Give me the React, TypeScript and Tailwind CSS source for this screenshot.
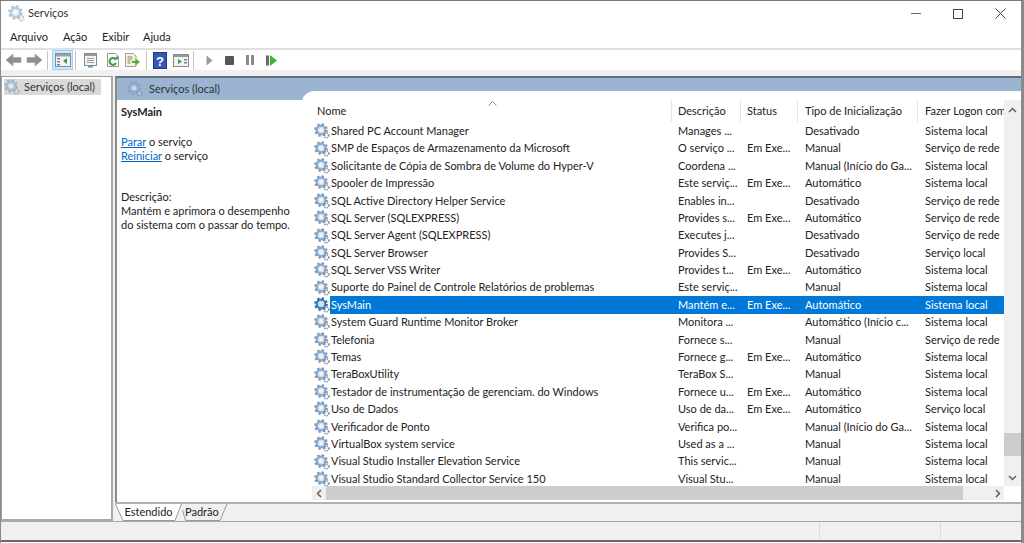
import React from "react";

const Gear = ({ size = 16, dim = false, selected = false }: { size?: number; dim?: boolean; selected?: boolean }) => (
  <svg width={size} height={size} viewBox="0 0 16 16" className={`shrink-0 ${dim ? "opacity-60" : ""}`}>
    <circle cx="7" cy="7" r="5.6" fill="none" stroke={selected ? "#2a5f99" : "#6f93b5"} strokeWidth="2.4" strokeDasharray="2.2 2.2" />
    <circle cx="7" cy="7" r="4.3" fill="none" stroke={selected ? "#3f7ab5" : "#88a8c6"} strokeWidth="2.2" />
    <circle cx="7" cy="7" r="2.5" fill={selected ? "#cfe3f5" : "#f2f6fa"} stroke="#a8c0d6" strokeWidth="0.6" />
    <circle cx="12.4" cy="12.4" r="2.4" fill="none" stroke="#7b8995" strokeWidth="1.7" strokeDasharray="1.1 1" />
    <circle cx="12.4" cy="12.4" r="1.2" fill="#e3e8ed" />
  </svg>
);

const Arrow = ({ flip = false }: { flip?: boolean }) => (
  <svg width="17" height="14" viewBox="0 0 17 14" className="shrink-0">
    <path
      d={flip ? "M1 4.500h8V1l7 6-7 6V9.500H1z" : "M16 4.500H8V1L1 7l7 6V9.500h8z"}
      fill="#8f8f8f"
      stroke="#a8a8a8"
      strokeWidth="0.8"
    />
  </svg>
);

const Sep = () => <div className="w-px h-[19px] bg-[#c4c4c4] shrink-0" />;

const Doc = ({ children }: { children: React.ReactNode }) => (
  <svg width="16" height="16" viewBox="0 0 16 16" className="shrink-0">{children}</svg>
);

const Toolbar = () => (
  <div className="h-[20px] flex items-center bg-white shrink-0 pl-[4px]">
    <Arrow />
    <div className="w-[4px] shrink-0" />
    <Arrow flip />
    <div className="w-[4px] shrink-0" />
    <Sep />
    <div className="ml-[4px] w-[21px] h-[20px] bg-[#cce8ff] border border-[#99d1ff] flex items-center justify-center shrink-0">
      <Doc>
        <rect x="0.500" y="1.500" width="15" height="13" fill="#f5f5f5" stroke="#8c8c8c" />
        <rect x="1" y="2" width="14" height="2.500" fill="#8fa3b5" />
        <rect x="2" y="6" width="3" height="1.500" fill="#6f8296" />
        <rect x="2" y="9" width="3" height="1.500" fill="#6f8296" />
        <rect x="2" y="12" width="3" height="1.500" fill="#6f8296" />
        <path d="M12 6v6L8 9z" fill="#2ea043" />
      </Doc>
    </div>
    <div className="w-[2px] shrink-0" />
    <Sep />
    <div className="w-[7px] shrink-0" />
    <Doc>
      <rect x="1.500" y="1.500" width="12" height="12" fill="#f7f4ea" stroke="#8a8a8a" />
      <rect x="2" y="2" width="11" height="2" fill="#9a9a9a" />
      <path d="M4 6.500h7M4 8.500h7M4 10.500h7" stroke="#8ba0b8" />
      <rect x="5" y="14" width="5" height="1.500" fill="#35a8e0" />
    </Doc>
    <div className="w-[6px] shrink-0" />
    <Doc>
      <path d="M2.500 1.500h8l3 3v10h-11z" fill="#fafafa" stroke="#9a9a9a" />
      <path d="M11 7.800A3.400 3.400 0 1 0 11 11" fill="none" stroke="#2f9e44" strokeWidth="2" />
      <path d="M9 7.200h4V3.800z" fill="#2f9e44" />
    </Doc>
    <div className="w-[3px] shrink-0" />
    <Doc>
      <path d="M1.500 1.500h8l2.500 2.500v10.500h-10.500z" fill="#f7f2d8" stroke="#a0a0a0" />
      <path d="M3.500 5h5M3.500 7h5M3.500 9h3M3.500 11h3" stroke="#8a8a70" />
      <path d="M8 9h3.500V6.500L16 10l-4.500 3.500V11H8z" fill="#4cae3f" />
    </Doc>
    <div className="w-[6px] shrink-0" />
    <Sep />
    <div className="w-[6px] shrink-0" />
    <svg width="14" height="17" viewBox="0 0 14 17" className="shrink-0">
      <rect x="0.500" y="0.500" width="13" height="16" fill="#3558b8" stroke="#1f3a80" />
      <text x="7" y="13.500" textAnchor="middle" fontSize="13" fontWeight="700" fontFamily="Liberation Sans, sans-serif" fill="#ffffff">?</text>
    </svg>
    <div className="w-[6px] shrink-0" />
    <Doc>
      <rect x="0.500" y="2.500" width="15" height="12" fill="#f2f2f2" stroke="#8c8c8c" />
      <rect x="1" y="3" width="14" height="2" fill="#8f9ba6" />
      <path d="M5 7v5l4-2.500z" fill="#2ea043" />
      <rect x="11" y="7" width="3" height="1.500" fill="#6f8296" />
      <rect x="11" y="10" width="3" height="1.500" fill="#6f8296" />
    </Doc>
    <div className="w-[4px] shrink-0" />
    <Sep />
    <div className="w-[12px] shrink-0" />
    <svg width="7" height="11" viewBox="0 0 7 11" className="shrink-0"><path d="M0.500 0.500l6 5-6 5z" fill="#9a9a9a" /></svg>
    <div className="w-[12px] shrink-0" />
    <div className="w-[9px] h-[9px] rounded-[1px] bg-[#555555] shrink-0" />
    <div className="w-[12px] shrink-0" />
    <div className="w-[8px] h-[10px] shrink-0 flex justify-between">
      <div className="w-[3px] bg-[#8a8a8a]" />
      <div className="w-[3px] bg-[#8a8a8a]" />
    </div>
    <div className="w-[12px] shrink-0" />
    <svg width="11" height="11" viewBox="0 0 11 11" className="shrink-0">
      <rect x="0" y="0.500" width="3" height="10" fill="#6a6a6a" />
      <path d="M4 0l7 5.500-7 5.500z" fill="#35b935" />
    </svg>
  </div>
);

type Row = [string, string, string, string, string];
const rows: Row[] = [
  ["Shared PC Account Manager", "Manages ...", "", "Desativado", "Sistema local"],
  ["SMP de Espaços de Armazenamento da Microsoft", "O serviço ...", "Em Exe...", "Manual", "Serviço de rede"],
  ["Solicitante de Cópia de Sombra de Volume do Hyper-V", "Coordena ...", "", "Manual (Início do Ga...", "Sistema local"],
  ["Spooler de Impressão", "Este serviç...", "Em Exe...", "Automático", "Sistema local"],
  ["SQL Active Directory Helper Service", "Enables in...", "", "Desativado", "Serviço de rede"],
  ["SQL Server (SQLEXPRESS)", "Provides s...", "Em Exe...", "Automático", "Serviço de rede"],
  ["SQL Server Agent (SQLEXPRESS)", "Executes j...", "", "Desativado", "Serviço de rede"],
  ["SQL Server Browser", "Provides S...", "", "Desativado", "Serviço local"],
  ["SQL Server VSS Writer", "Provides t...", "Em Exe...", "Automático", "Sistema local"],
  ["Suporte do Painel de Controle Relatórios de problemas", "Este serviç...", "", "Manual", "Sistema local"],
  ["SysMain", "Mantém e...", "Em Exe...", "Automático", "Sistema local"],
  ["System Guard Runtime Monitor Broker", "Monitora ...", "", "Automático (Início c...", "Sistema local"],
  ["Telefonia", "Fornece s...", "", "Manual", "Serviço de rede"],
  ["Temas", "Fornece g...", "Em Exe...", "Automático", "Sistema local"],
  ["TeraBoxUtility", "TeraBox S...", "", "Manual", "Sistema local"],
  ["Testador de instrumentação de gerenciam. do Windows", "Fornece u...", "Em Exe...", "Automático", "Sistema local"],
  ["Uso de Dados", "Uso de da...", "Em Exe...", "Automático", "Serviço local"],
  ["Verificador de Ponto", "Verifica po...", "", "Manual (Início do Ga...", "Sistema local"],
  ["VirtualBox system service", "Used as a ...", "", "Manual", "Sistema local"],
  ["Visual Studio Installer Elevation Service", "This servic...", "", "Manual", "Sistema local"],
  ["Visual Studio Standard Collector Service 150", "Visual Stu...", "", "Manual", "Sistema local"],
];

const Chevron = ({ d }: { d: string }) => (
  <svg width="9" height="9" viewBox="0 0 9 9" className="shrink-0">
    <path d={d} fill="none" stroke="#606060" strokeWidth="1.500" />
  </svg>
);

export default function App() {
  return (
    <div
      className="w-[1024px] h-[543px] overflow-hidden flex flex-col bg-white text-[11px] text-[#1a1a1a] pb-[1px] border-t border-[#7a7a7a] border-l border-r-[3px] border-r-[#8a8a8a] border-l-[#8a8a8a]"
      style={{ fontFamily: 'Lato, "Noto Sans", sans-serif' }}
    >
      {/* title */}
      <div className="h-[25px] bg-white flex items-center shrink-0 pl-[7px]">
        <Gear size={17} dim />
        <span className="ml-[3px] text-[#333333]">Serviços</span>
        <div className="ml-auto flex items-center">
          <div className="w-[42px] flex justify-center">
            <div className="w-[10px] h-px bg-[#666666]" />
          </div>
          <div className="w-[42px] flex justify-center">
            <div className="w-[10px] h-[10px] border border-[#444444]" />
          </div>
          <div className="w-[42px] flex justify-center">
            <svg width="11" height="11" viewBox="0 0 11 11"><path d="M0.500 0.500l10 10M10.500 0.500l-10 10" stroke="#444444" strokeWidth="1" /></svg>
          </div>
        </div>
      </div>
      {/* menu */}
      <div className="h-[24px] bg-white flex items-center shrink-0 pl-[9px] gap-[15px] text-[#222222] border-b-2 border-[#e0e0e0]">
        <span className="w-[38px]">Arquivo</span>
        <span className="w-[24px]">Ação</span>
        <span className="w-[26px]">Exibir</span>
        <span>Ajuda</span>
      </div>
      <Toolbar />
      {/* body */}
      <div className="flex-1 min-h-0 flex pt-[6px] bg-[#f0f0f0]">
        {/* tree */}
        <div className="w-[112px] shrink-0 h-full bg-white border-t border-t-[#a0a0a0] border-l border-l-[#a0a0a0] border-r-2 border-r-[#a8a8a8] border-b-2 border-b-[#a8a8a8] p-[2px]">
          <div className="h-[16px] w-[97px] bg-[#d9d9d9] flex items-center text-[#333333] whitespace-nowrap">
            <Gear size={16} dim />
            <span className="ml-[4px]">Serviços (local)</span>
          </div>
        </div>
        {/* main */}
        <div className="flex-1 min-w-0 ml-[2px] flex flex-col">
          <div className="h-[426px] shrink-0 flex bg-[#9ab4d1] border-t-2 border-t-[#5f6f80] border-l-2 border-l-[#8a8a8a]">
            <div className="w-[185px] shrink-0 flex flex-col">
              <div className="h-[22px] shrink-0 flex items-center pl-[10px] text-[#333333]">
                <Gear size={16} dim />
                <span className="ml-[6px]">Serviços (local)</span>
              </div>
              <div className="flex-1 bg-white pl-[4px] pt-[5px] leading-[14px] text-[#222222] whitespace-nowrap">
                <div className="font-bold">SysMain</div>
                <div className="mt-[16px]"><span className="text-[#0066cc] underline">Parar</span> o serviço</div>
                <div><span className="text-[#0066cc] underline">Reiniciar</span> o serviço</div>
                <div className="mt-[27px]">Descrição:</div>
                <div>Mantém e aprimora o desempenho</div>
                <div>do sistema com o passar do tempo.</div>
              </div>
            </div>
            <div className="flex-1 min-w-0 mt-[13px] bg-white rounded-tl-[12px] flex overflow-hidden">
              <div className="flex-1 min-w-0 flex flex-col pt-[9px]">
                {/* header */}
                <div className="h-[22px] shrink-0 flex text-[#222222] relative">
                  <div className="w-[370px] shrink-0 h-full flex items-center pl-[15px] border-r border-[#e5e5e5]">Nome</div>
                  <div className="w-[69px] shrink-0 h-full flex items-center pl-[6px] border-r border-[#e5e5e5] whitespace-nowrap">Descrição</div>
                  <div className="w-[57px] shrink-0 h-full flex items-center pl-[6px] border-r border-[#e5e5e5] whitespace-nowrap">Status</div>
                  <div className="w-[120px] shrink-0 h-full flex items-center pl-[7px] border-r border-[#e5e5e5] whitespace-nowrap">Tipo de Inicialização</div>
                  <div className="flex-1 min-w-0 pl-[7px] flex items-center whitespace-nowrap overflow-hidden">Fazer Logon com</div>
                  <svg width="9" height="5" viewBox="0 0 9 5" className="absolute left-[186px] top-[1px]">
                    <path d="M0.500 4.500l4-4 4 4" fill="none" stroke="#8a8a8a" />
                  </svg>
                </div>
                {/* rows */}
                <div className="h-[364px] shrink-0 overflow-hidden pt-[0.5px]">
                  {rows.map((r) => {
                    const selected = r[0] === "SysMain";
                    return (
                      <div key={r[0]} className="h-[17.4px] flex items-center whitespace-nowrap">
                        <div className="w-[28px] shrink-0 flex justify-end">
                          <Gear size={16} selected={selected} />
                        </div>
                        <div className={`flex-1 min-w-0 h-full flex items-center ${selected ? "bg-[#0078d7] text-white" : "text-[#222222]"}`}>
                          <div className="w-[342px] shrink-0 overflow-hidden pl-[1px]">{r[0]}</div>
                          <div className="w-[69px] shrink-0 pl-[6px]">{r[1]}</div>
                          <div className="w-[57px] shrink-0 pl-[6px]">{r[2]}</div>
                          <div className="w-[120px] shrink-0 pl-[7px]">{r[3]}</div>
                          <div className="flex-1 min-w-0 pl-[7px]">{r[4]}</div>
                        </div>
                      </div>
                    );
                  })}
                </div>
                {/* horizontal scrollbar */}
                <div className="h-[14px] shrink-0 flex bg-[#f0f0f0] ml-[10px]">
                  <div className="w-[14px] flex items-center justify-center"><Chevron d="M6 1L2.500 4.500 6 8" /></div>
                  <div className="w-[637px] bg-[#cdcdcd]" />
                  <div className="flex-1" />
                  <div className="w-[14px] flex items-center justify-center"><Chevron d="M3 1l3.500 3.500L3 8" /></div>
                </div>
                <div className="h-[2px] shrink-0 bg-white" />
              </div>
              {/* vertical scrollbar */}
              <div className="w-[17px] shrink-0 flex flex-col bg-[#f0f0f0] mt-[9px] mb-[16px]">
                <div className="h-[21px] flex items-center justify-center"><Chevron d="M1 6l3.500-3.500L8 6" /></div>
                <div className="h-[312px]" />
                <div className="h-[23px] bg-[#cdcdcd]" />
                <div className="flex-1" />
                <div className="h-[18px] flex items-center justify-center"><Chevron d="M1 3l3.500 3.500L8 3" /></div>
              </div>
            </div>
          </div>
          {/* tabs */}
          <div className="flex-1 min-h-0 flex items-start border-t-2 border-[#b0b0b0]">
            <div className="relative w-[67px] h-[17px] flex items-center justify-center text-[#222222]">
              <svg width="67" height="17" viewBox="0 0 67 17" className="absolute inset-0">
                <path d="M0.500 0L8 16.500H60L66.500 0" fill="#ffffff" stroke="#9a9a9a" />
              </svg>
              <span className="relative">Estendido</span>
            </div>
            <div className="relative w-[46px] h-[17px] flex items-center pl-[3px] text-[#222222]">
              <svg width="46" height="17" viewBox="0 0 46 17" className="absolute inset-0">
                <path d="M0.500 6L3.500 16.500H38L45 0" fill="none" stroke="#9a9a9a" />
              </svg>
              <span className="relative">Padrão</span>
            </div>
          </div>
        </div>
      </div>
      {/* status */}
      <div className="h-[21px] shrink-0 flex border-t border-[#a8a8a8] border-b-2 border-b-[#6a6a6a] bg-[#f0f0f0]">
        <div className="w-[819px] border-r border-[#dcdcdc]" />
        <div className="w-[121px] border-r border-[#dcdcdc]" />
        <div className="flex-1" />
      </div>
    </div>
  );
}
